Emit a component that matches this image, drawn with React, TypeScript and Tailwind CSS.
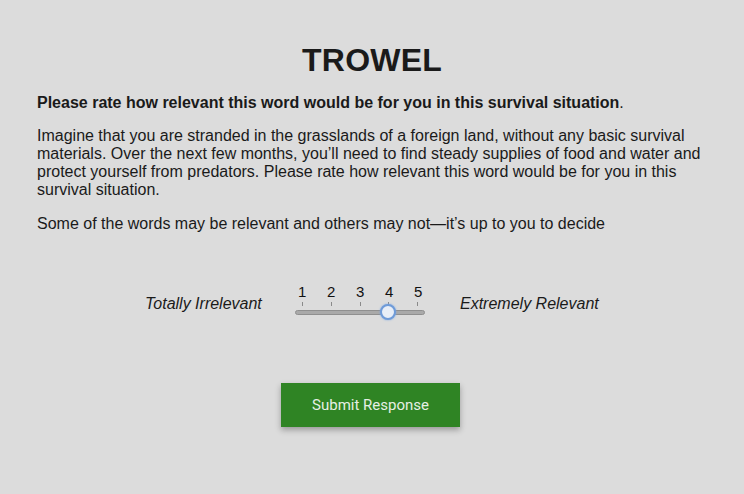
import { useState } from "react";

const ticks = [1, 2, 3, 4, 5];

function RatingSlider() {
  const [value, setValue] = useState(4);
  const pct = ((value - 1) / 4) * 100;

  return (
    <div className="flex items-center justify-center pl-[6px]">
      <span className="w-[150px] whitespace-nowrap text-right pr-[34px] italic text-[16px] text-[#1a1a1a] mt-[5px]">
        Totally Irrelevant
      </span>
      <div className="w-[130px] flex flex-col">
        <div className="flex justify-between px-[3px] text-[15px] leading-[16px] text-[#111]">
          {ticks.map((t) => (
            <span key={t} className="w-[8px] text-center">
              {t}
            </span>
          ))}
        </div>
        <div className="flex justify-between px-[7px] mt-[2px]">
          {ticks.map((t) => (
            <span key={t} className="w-px h-[4px] bg-[#8a8a8a]" />
          ))}
        </div>
        <div className="relative h-[14px] mt-[-1px]">
          <div className="absolute left-0 right-0 top-[5px] h-[5px] rounded-full bg-[#a9a9a9] border border-[#8f8f8f]" />
          <button
            onClick={() => setValue(value === 5 ? 1 : value + 1)}
            className="absolute top-[-1px] w-[16px] h-[16px] rounded-full bg-[#e8eef7] border-[2px] border-[#6f9bd8] shadow-[0_0_2px_#7aa6e6]"
            style={{ left: `calc(${pct}% * 0.877 - 1px)` }}
          />
        </div>
      </div>
      <span className="w-[180px] whitespace-nowrap pl-[35px] italic text-[16px] text-[#1a1a1a] mt-[5px]">
        Extremely Relevant
      </span>
    </div>
  );
}

export default function App() {
  return (
    <div className="min-h-[494px] w-full bg-[#dcdcdc] font-['Liberation_Sans',Arial,sans-serif] text-[#1a1a1a]">
      <div className="px-[37px] pt-[40px]">
        <h1 className="text-center text-[32px] font-bold leading-[40px] tracking-[0.2px] text-[#1a1a1a]">
          TROWEL
        </h1>
        <p className="mt-[14px] text-[16px] leading-[18px]">
          <span className="font-bold">
            Please rate how relevant this word would be for you in this survival situation
          </span>
          .
        </p>
        <p className="mt-[15px] text-[16px] leading-[18px]">
          Imagine that you are stranded in the grasslands of a foreign land, without any basic survival
          <br />
          materials. Over the next few months, you’ll need to find steady supplies of food and water and
          <br />
          protect yourself from predators. Please rate how relevant this word would be for you in this
          <br />
          survival situation.
        </p>
        <p className="mt-[16px] text-[16px] leading-[18px]">
          Some of the words may be relevant and others may not—it’s up to you to decide
        </p>
      </div>
      <div className="mt-[51px]">
        <RatingSlider />
      </div>
      <div className="mt-[64px] flex justify-center pr-[3px]">
        <button className="w-[179px] h-[44px] bg-[#2f8424] text-[#e6efe4] text-[15px] font-['Roboto',sans-serif] shadow-[0_3px_6px_rgba(0,0,0,0.3)]">
          Submit Response
        </button>
      </div>
    </div>
  );
}
